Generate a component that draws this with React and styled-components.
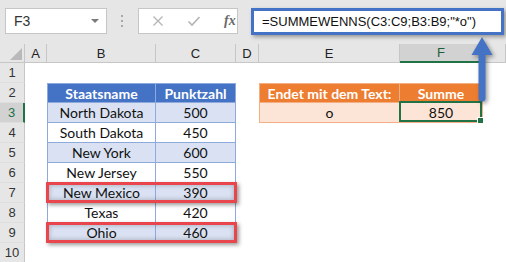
import styled, { createGlobalStyle } from 'styled-components';

const COLS = [
  { id: 'A', w: 22 },
  { id: 'B', w: 109 },
  { id: 'C', w: 80 },
  { id: 'D', w: 23 },
  { id: 'E', w: 141 },
  { id: 'F', w: 83 },
];

const ROWS = [1, 2, 3, 4, 5, 6, 7, 8, 9, 10];

const STATES = [
  ['North Dakota', 500],
  ['South Dakota', 450],
  ['New York', 600],
  ['New Jersey', 550],
  ['New Mexico', 390],
  ['Texas', 420],
  ['Ohio', 460],
];

const ACTIVE = { col: 'F', row: 3 };
const MARKED_ROWS = [7, 9];

// works out what sits in a cell: the state table in B2:C9, the result in E2:F3
const cellAt = (row, col) => {
  if ((col === 'B' || col === 'C') && row >= 2 && row <= 9) {
    const head = row === 2;
    const text = head
      ? col === 'B' ? 'Staatsname' : 'Punktzahl'
      : STATES[row - 3][col === 'B' ? 0 : 1];
    return {
      text,
      head,
      line: '#8ea9db',
      fill: head ? '#4472c4' : row % 2 ? '#d9e1f2' : '#ffffff',
      left: col === 'B',
      top: head,
    };
  }
  if ((col === 'E' || col === 'F') && (row === 2 || row === 3)) {
    const head = row === 2;
    const text = head
      ? col === 'E' ? 'Endet mit dem Text:' : 'Summe'
      : col === 'E' ? 'o' : 850;
    return {
      text,
      head,
      line: '#f4b084',
      fill: head ? '#ed7d31' : '#fce4d6',
      left: col === 'E',
      top: head,
    };
  }
  return {};
};

const App = () => {
  return (
    <Window>
      <GlobalStyle />
      <TopBar>
        <NameBox>
          <span>F3</span>
          <DropCaret />
        </NameBox>
        <Grip>
          <i />
          <i />
          <i />
        </Grip>
        <FuncBox>
          <svg width="12" height="12" viewBox="0 0 12 12">
            <path d="M1.5 1.5 L10.5 10.5 M10.5 1.5 L1.5 10.5" stroke="#b4b4b4" strokeWidth="1.3" fill="none" />
          </svg>
          <svg width="14" height="12" viewBox="0 0 14 12">
            <path d="M1.5 6.5 L5 10 L12.5 2" stroke="#b4b4b4" strokeWidth="1.6" fill="none" />
          </svg>
          <FxLabel>fx</FxLabel>
        </FuncBox>
        <FormulaBox>=SUMMEWENNS(C3:C9;B3:B9;"*o")</FormulaBox>
      </TopBar>

      <Sheet>
        <Corner $r={1} $c={1} />
        {COLS.map((col, i) => (
          <ColHead key={col.id} $r={1} $c={i + 2} $active={col.id === ACTIVE.col}>
            {col.id}
          </ColHead>
        ))}
        <ColHead $r={1} $c={COLS.length + 2} />

        {ROWS.map((row) => (
          <RowHead key={`h${row}`} $r={row + 1} $c={1} $active={row === ACTIVE.row}>
            {row}
          </RowHead>
        ))}

        {ROWS.map((row) =>
          COLS.map((col, i) => {
            const cell = cellAt(row, col.id);
            return (
              <Cell
                key={`${col.id}${row}`}
                $r={row + 1}
                $c={i + 2}
                $fill={cell.fill}
                $line={cell.line}
                $left={cell.left}
                $top={cell.top}
                $head={cell.head}
                $active={row === ACTIVE.row && col.id === ACTIVE.col}
              >
                {cell.text}
              </Cell>
            );
          })
        )}

        {MARKED_ROWS.map((row) => (
          <Marker key={`m${row}`} $r={row + 1} />
        ))}
      </Sheet>

      <Arrow width="36" height="80" viewBox="0 0 36 80">
        <path d="M16 7 L26.5 25 L19.5 25 L19.5 68 Q19.5 71.5 16 71.5 Q12.5 71.5 12.5 68 L12.5 25 L5.5 25 Z" fill="#4472c4" />
      </Arrow>
    </Window>
  );
};

const GlobalStyle = createGlobalStyle`
  html, body {
    margin: 0;
    padding: 0;
    background: #ffffff;
    overflow: hidden;
  }

  body {
    font-family: "Liberation Sans", Arial, sans-serif;
  }
`;

const Window = styled.div`
  position: relative;
  width: 506px;
  height: 262px;
  overflow: hidden;
  background: #ffffff;
`;

const TopBar = styled.div`
  display: flex;
  align-items: flex-start;
  box-sizing: border-box;
  height: 44px;
  padding: 8px 0 0 5px;
  background: #e6e6e6;
`;

const NameBox = styled.div`
  display: flex;
  align-items: center;
  justify-content: space-between;
  box-sizing: border-box;
  width: 102px;
  height: 26px;
  padding: 0 7px 0 8px;
  background: #ffffff;
  border: 1px solid #c6c6c6;
  font-size: 14px;
  color: #333333;
`;

const DropCaret = styled.span`
  width: 0;
  height: 0;
  border-left: 4px solid transparent;
  border-right: 4px solid transparent;
  border-top: 4px solid #7a7a7a;
`;

const Grip = styled.div`
  display: flex;
  flex-direction: column;
  gap: 3px;
  margin: 7px 0 0 14px;

  i {
    display: block;
    width: 2px;
    height: 2px;
    background: #a8a8a8;
  }
`;

const FuncBox = styled.div`
  display: flex;
  align-items: center;
  gap: 23px;
  box-sizing: border-box;
  width: 100px;
  height: 26px;
  margin-left: 15px;
  padding-left: 13px;
  background: #ffffff;
  border: 1px solid #c6c6c6;
`;

const FxLabel = styled.span`
  font-family: "Liberation Serif", "Times New Roman", serif;
  font-style: italic;
  font-weight: bold;
  font-size: 14px;
  color: #6a6a6a;
`;

const FormulaBox = styled.div`
  display: flex;
  align-items: center;
  box-sizing: border-box;
  width: 253px;
  height: 27px;
  margin-left: 13px;
  padding-left: 8px;
  background: #ffffff;
  border: 3px solid #4472c4;
  box-shadow: 2px 2px 4px rgba(0, 0, 0, 0.35);
  font-size: 13px;
  color: #111111;
  white-space: nowrap;
  position: relative;
  z-index: 3;
`;

const Sheet = styled.div`
  display: grid;
  grid-template-columns: 25px ${COLS.map((c) => `${c.w}px`).join(' ')} 1fr;
  grid-template-rows: 19px repeat(${ROWS.length}, 20px);
`;

const Placed = styled.div`
  grid-row: ${(p) => p.$r};
  grid-column: ${(p) => p.$c};
  box-sizing: border-box;
  min-width: 0;
`;

const Corner = styled(Placed)`
  position: relative;
  background: #e6e6e6;
  border-right: 1px solid #c6c6c6;
  border-bottom: 1px solid #c6c6c6;

  &::after {
    content: '';
    position: absolute;
    left: 10px;
    top: 4px;
    width: 12px;
    height: 12px;
    background: #b9b9b9;
    clip-path: polygon(100% 0, 100% 100%, 0 100%);
  }
`;

const ColHead = styled(Placed)`
  display: flex;
  align-items: center;
  justify-content: center;
  background: ${(p) => (p.$active ? '#d2d2d2' : '#e6e6e6')};
  border-right: 1px solid #c6c6c6;
  border-bottom: ${(p) => (p.$active ? '2px solid #217346' : '1px solid #c6c6c6')};
  font-size: 13px;
  color: ${(p) => (p.$active ? '#1e5e3a' : '#222222')};
`;

const RowHead = styled(Placed)`
  display: flex;
  align-items: center;
  justify-content: center;
  background: ${(p) => (p.$active ? '#d2d2d2' : '#e6e6e6')};
  border-right: ${(p) => (p.$active ? '2px solid #217346' : '1px solid #c6c6c6')};
  border-bottom: 1px solid #dedede;
  font-size: 13px;
  color: ${(p) => (p.$active ? '#217346' : '#333333')};
`;

const Cell = styled(Placed)`
  position: relative;
  display: flex;
  align-items: center;
  justify-content: center;
  background: ${(p) => p.$fill || '#ffffff'};
  border-right: ${(p) => (p.$line ? `1px solid ${p.$line}` : 'none')};
  border-bottom: ${(p) => (p.$line ? `1px solid ${p.$line}` : 'none')};
  border-left: ${(p) => (p.$left ? `1px solid ${p.$line}` : 'none')};
  border-top: ${(p) => (p.$top ? `1px solid ${p.$line}` : 'none')};
  font-family: Lato, "Liberation Sans", sans-serif;
  font-size: 14px;
  font-weight: ${(p) => (p.$head ? 700 : 400)};
  color: ${(p) => (p.$head ? '#ffffff' : '#111111')};
  white-space: nowrap;

  ${(p) =>
    p.$active &&
    `
    &::after {
      content: '';
      position: absolute;
      left: -1px;
      top: -2px;
      right: 0;
      bottom: 0;
      border: 2px solid #217346;
    }

    &::before {
      content: '';
      position: absolute;
      right: -2px;
      bottom: -2px;
      width: 5px;
      height: 5px;
      background: #217346;
      border: 1px solid #ffffff;
      z-index: 1;
    }
  `}
`;

const Marker = styled(Placed)`
  grid-column: 3 / 5;
  margin: -1px -1px 0 -1px;
  border: 3px solid #e8464c;
  box-shadow: 2px 2px 4px rgba(0, 0, 0, 0.4), inset 0 0 5px rgba(0, 0, 0, 0.25);
  z-index: 2;
  pointer-events: none;
`;

const Arrow = styled.svg`
  position: absolute;
  left: 466px;
  top: 30px;
  z-index: 4;
  filter: drop-shadow(2px 2px 2px rgba(0, 0, 0, 0.4));
`;

export default App;
